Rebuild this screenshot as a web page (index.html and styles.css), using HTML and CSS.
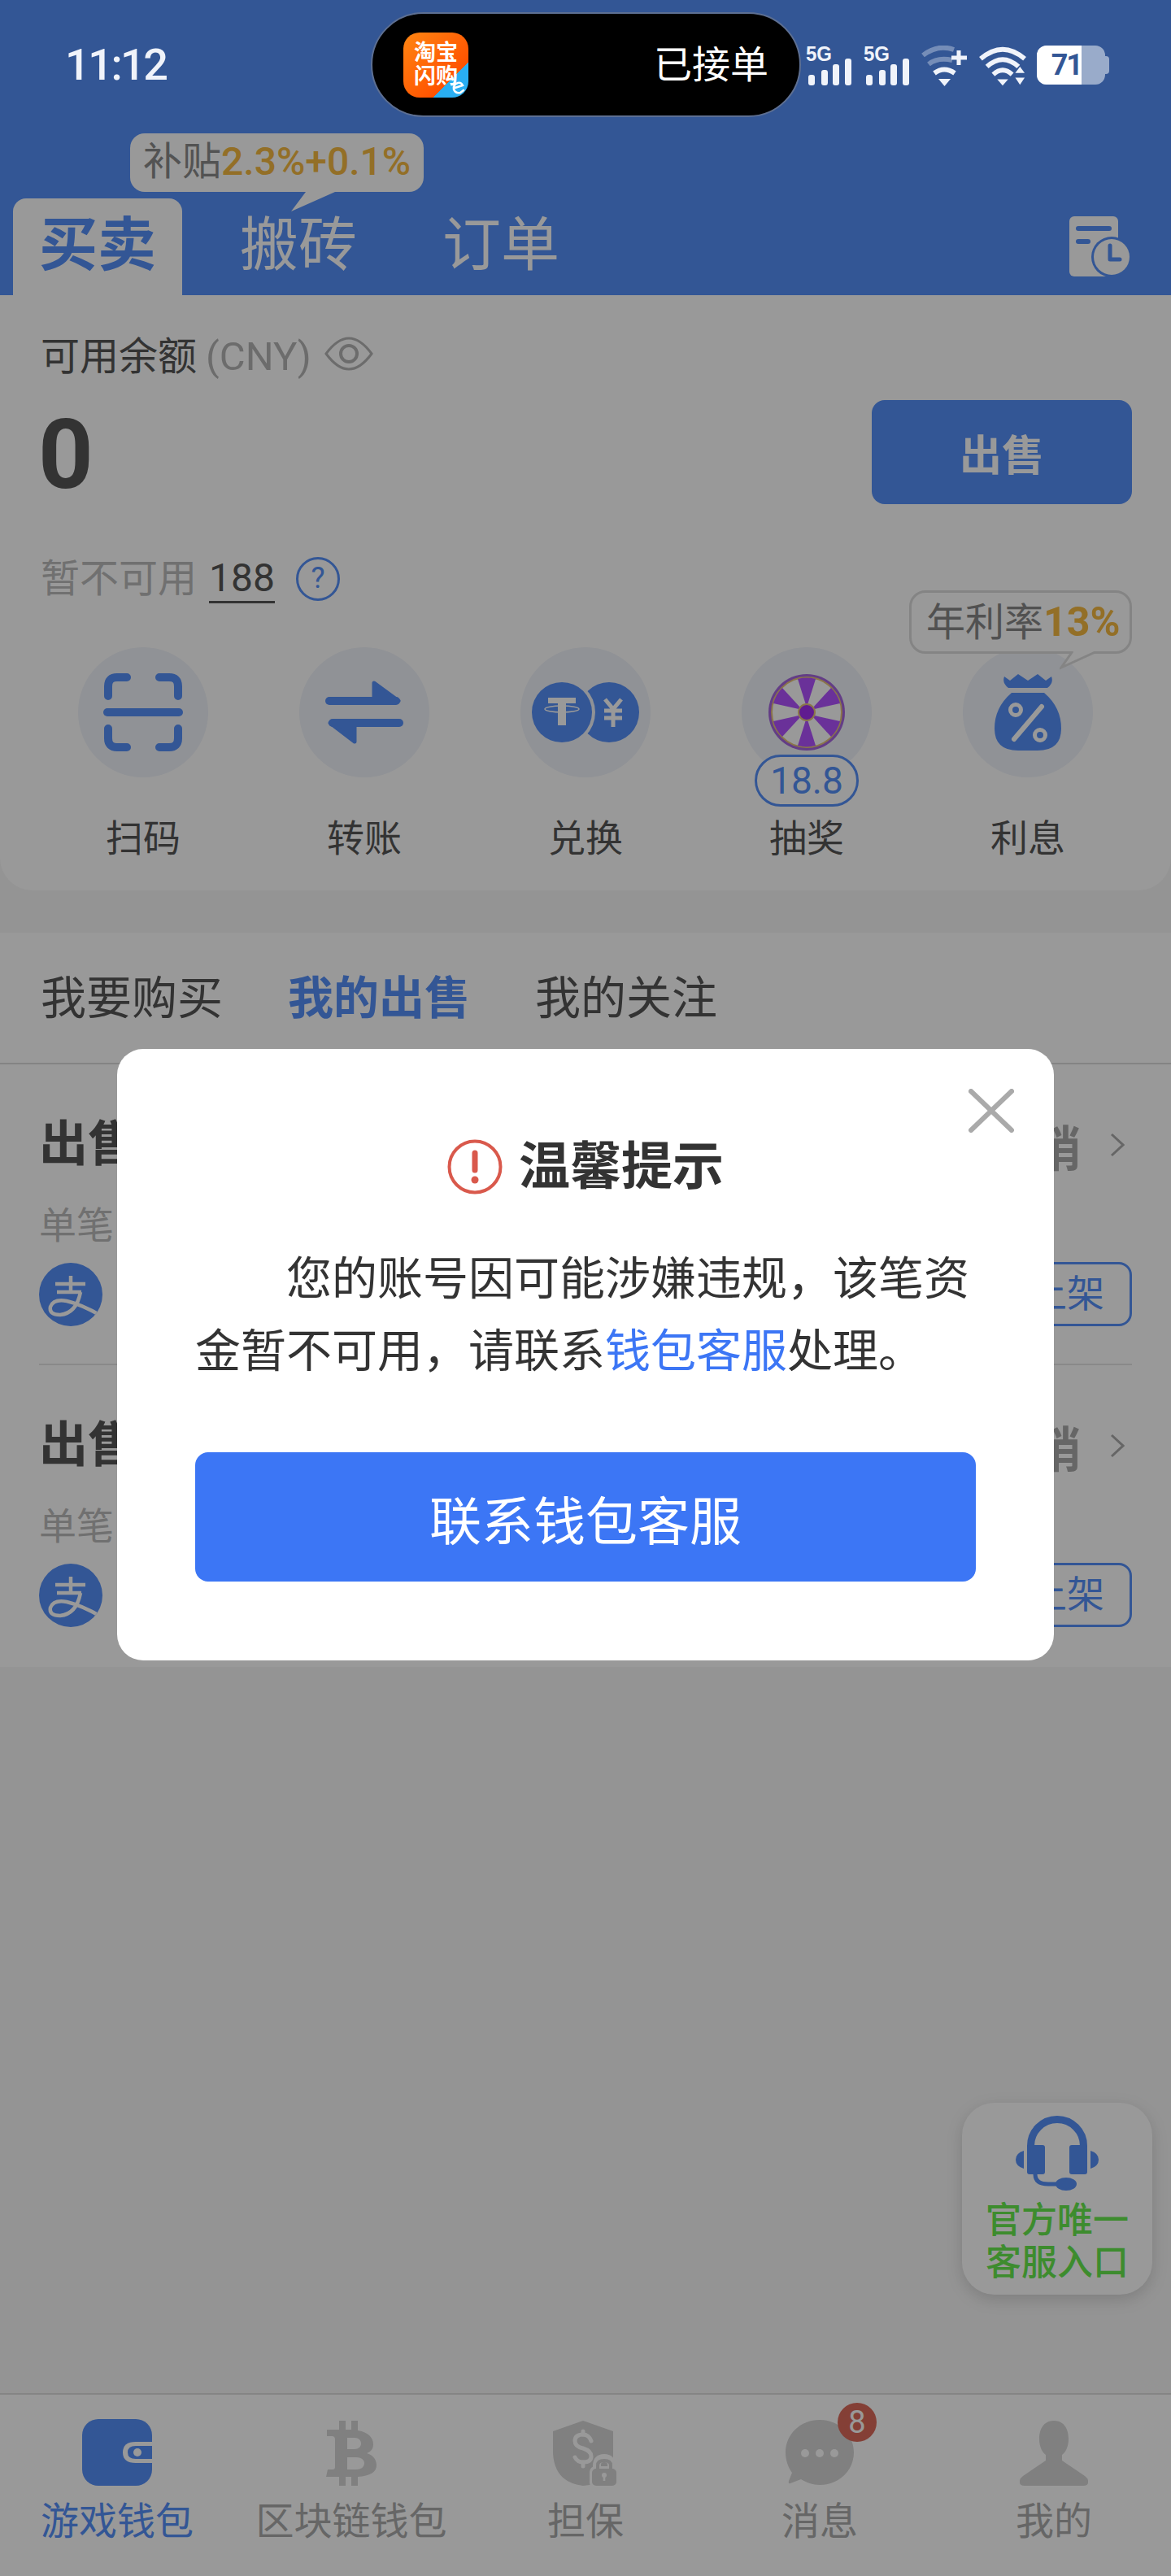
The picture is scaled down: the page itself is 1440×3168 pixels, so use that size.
FILE: index.html
```html
<!DOCTYPE html>
<html lang="zh-CN">
<head>
    <meta charset="UTF-8">
    <meta name="viewport" content="width=device-width, initial-scale=1.0">
    <title>钱包</title>
    <link rel="stylesheet" href="styles.css">
</head>
<body>
<div class="page">

    <!-- Header -->
    <header class="header">
        <div class="status-bar">
            <div class="time">11:12</div>
            <div class="island">
                <div class="app-tile">
                    <span>淘宝</span><span>闪购</span>
                    <svg class="app-e" viewBox="0 0 20 20"><path d="M4 10.500 L15 7 Q13 3 9 4 Q3 6 4 12 Q6 17 12 16 L16 13" fill="none" stroke="#fff" stroke-width="2.500" stroke-linecap="round"/></svg>
                </div>
                <div class="island-text">已接单</div>
            </div>
            <div class="status-icons">
                <svg class="sim" viewBox="0 -8 58 58"><text x="0" y="19" class="sim-text" textLength="32" lengthAdjust="spacingAndGlyphs">5G</text><rect x="3" y="36" width="8" height="13" rx="3"/><rect x="19" y="30" width="8" height="19" rx="3"/><rect x="33" y="23" width="8" height="26" rx="3"/><rect x="48" y="16" width="8" height="33" rx="3"/></svg>
                <svg class="sim" viewBox="0 -8 58 58"><text x="0" y="19" class="sim-text" textLength="32" lengthAdjust="spacingAndGlyphs">5G</text><rect x="3" y="36" width="8" height="13" rx="3"/><rect x="19" y="30" width="8" height="19" rx="3"/><rect x="33" y="23" width="8" height="26" rx="3"/><rect x="48" y="16" width="8" height="33" rx="3"/></svg>
                <svg class="wifi" viewBox="0 0 58 50"><g fill="none" stroke="#f0f3fa" stroke-width="6"><path d="M2 12 Q20 -2 40 5" opacity=".35"/><path d="M9 23 Q20 14 38 18" opacity=".35"/><path d="M16 34 Q28 25 41 34"/></g><path d="M21 41 H36 L28.500 50 Z" fill="#f0f3fa"/><path d="M46 6 V24 M37 15 H56" stroke="#f0f3fa" stroke-width="5" fill="none"/></svg>
                <svg class="wifi" viewBox="0 0 60 50"><g fill="none" stroke="#f0f3fa" stroke-width="6"><path d="M2 16 Q30 -8 58 16"/><path d="M10 26 Q30 8 50 26"/><path d="M18 36 Q30 25 42 36"/></g><path d="M23 42 H37 L30 50 Z" fill="#f0f3fa"/><path d="M46 34 L58 34 L52 26 Z M46 40 H58 L52 49 Z" fill="#f0f3fa"/></svg>
                <div class="battery">
                    <div class="battery-box"><div class="battery-fill">71</div></div>
                    <i class="battery-nub"></i>
                </div>
            </div>
        </div>

        <div class="header-tabs">
            <div class="subsidy">补贴<b>2.3%+0.1%</b><i class="subsidy-tail"></i></div>
            <div class="tab active">买卖</div>
            <div class="tab">搬砖</div>
            <div class="tab">订单</div>
            <svg class="records" viewBox="0 0 75 74">
                <rect x="0" y="0" width="60" height="74" rx="6" fill="#fff"/>
                <rect x="8" y="12" width="44" height="6" rx="3" fill="#558ff8"/>
                <rect x="8" y="28" width="18" height="6" rx="3" fill="#558ff8"/>
                <circle cx="52" cy="50" r="25" fill="#558ff8"/>
                <circle cx="52" cy="50" r="22" fill="#fff"/>
                <path d="M50 36 V53 H62" fill="none" stroke="#558ff8" stroke-width="5" stroke-linecap="round" stroke-linejoin="round"/>
            </svg>
        </div>
    </header>

    <!-- Balance card -->
    <section class="card">
        <div class="balance-label">
            <span>可用余额</span><span class="unit">(CNY)</span>
            <svg class="eye" viewBox="0 0 60 42"><path d="M2 21 Q30 -17 58 21 Q30 59 2 21 Z" fill="none" stroke="#b5b5b5" stroke-width="3"/><circle cx="30" cy="21" r="10" fill="none" stroke="#b5b5b5" stroke-width="4"/></svg>
        </div>
        <div class="balance-row">
            <div class="balance">0</div>
            <button class="sell-btn">出售</button>
        </div>
        <div class="frozen-row">
            <span class="frozen-label">暂不可用</span>
            <span class="frozen-value">188</span>
            <span class="help">?</span>
        </div>
        <div class="actions">
            <div class="action">
                <div class="action-icon">
                    <svg viewBox="0 0 160 160"><g fill="none" stroke="#558ff8" stroke-width="10" stroke-linecap="round"><path d="M60 37 H48 Q37 37 37 48 V60"/><path d="M100 37 H112 Q123 37 123 48 V60"/><path d="M37 100 V112 Q37 123 48 123 H60"/><path d="M123 100 V112 Q123 123 112 123 H100"/><path d="M36 80 H124"/></g></svg>
                </div>
                <div class="action-name">扫码</div>
            </div>
            <div class="action">
                <div class="action-icon">
                    <svg viewBox="0 0 160 160"><g fill="#558ff8" stroke="#558ff8" stroke-linejoin="round" stroke-width="5"><path d="M92 44 L122 66 H92 Z"/><path d="M68 116 L38 93 H68 Z"/></g><g stroke="#558ff8" stroke-width="10" stroke-linecap="round"><path d="M37 66 H119"/><path d="M41 93 H123"/></g></svg>
                </div>
                <div class="action-name">转账</div>
            </div>
            <div class="action">
                <div class="action-icon">
                    <svg viewBox="0 0 160 160"><g transform="translate(8 0)"><circle cx="101" cy="80" r="37" fill="#558ff8"/><g stroke="#fff" stroke-width="5" fill="none"><path d="M96 64 L106 76 L116 64 M106 76 V98 M95 78 H117 M95 87 H117"/></g><circle cx="43" cy="80" r="41" fill="#f0f3fa"/><circle cx="43" cy="80" r="37" fill="#558ff8"/><path d="M26 62 H60 V69 H48 V96 H38 V69 H26 Z" fill="#fff"/><ellipse cx="43" cy="76" rx="21" ry="4" fill="none" stroke="#fff" stroke-width="1.500"/></g></svg>
                </div>
                <div class="action-name">兑换</div>
            </div>
            <div class="action">
                <div class="action-icon">
                    <svg viewBox="0 0 160 160">
                        <circle cx="80" cy="80" r="47" fill="#a566e0"/>
                        <circle cx="80" cy="80" r="43" fill="#fff" stroke="#e6c47a" stroke-width="2"/>
                        <g fill="#b153ff" transform="translate(80 80)">
                            <path d="M0 -6 L-11 -41 A42 42 0 0 1 11 -41 Z"/>
                            <path d="M0 -6 L-11 -41 A42 42 0 0 1 11 -41 Z" transform="rotate(60)"/>
                            <path d="M0 -6 L-11 -41 A42 42 0 0 1 11 -41 Z" transform="rotate(120)"/>
                            <path d="M0 -6 L-11 -41 A42 42 0 0 1 11 -41 Z" transform="rotate(180)"/>
                            <path d="M0 -6 L-11 -41 A42 42 0 0 1 11 -41 Z" transform="rotate(240)"/>
                            <path d="M0 -6 L-11 -41 A42 42 0 0 1 11 -41 Z" transform="rotate(300)"/>
                        </g>
                        <circle cx="80" cy="80" r="10" fill="#a030f0" stroke="#e6c47a" stroke-width="2"/>
                    </svg>
                </div>
                <div class="lottery-pill">18.8</div>
                <div class="action-name">抽奖</div>
            </div>
            <div class="action">
                <div class="rate-tip">年利率<b>13%</b><svg class="rate-tail" viewBox="0 0 50 24"><path d="M16 0 L2 20 L46 0" fill="#fff" stroke="#ddd" stroke-width="3"/></svg></div>
                <div class="action-icon">
                    <svg viewBox="0 0 160 160">
                        <path d="M51 36 L58 41 L68 33 L80 41 L92 33 L102 41 L109 36 Q112 44 104 50 H56 Q48 44 51 36 Z" fill="#558ff8"/>
                        <path d="M60 56 H100 Q121 74 121 100 Q121 127 92 127 H68 Q39 127 39 100 Q39 74 60 56 Z" fill="#558ff8"/>
                        <path d="M63 113 L97 73" stroke="#fff" stroke-width="6" stroke-linecap="round"/>
                        <circle cx="65" cy="77" r="6.500" fill="none" stroke="#fff" stroke-width="5"/>
                        <circle cx="95" cy="108" r="6.500" fill="none" stroke="#fff" stroke-width="5"/>
                    </svg>
                </div>
                <div class="action-name">利息</div>
            </div>
        </div>
    </section>

    <!-- Orders -->
    <section class="orders">
        <div class="order-tabs">
            <div class="order-tab">我要购买</div>
            <div class="order-tab active">我的出售</div>
            <div class="order-tab">我的关注</div>
        </div>
        <div class="order-list">
            <div class="order">
                <div class="order-top">
                    <div class="order-title">出售</div>
                    <div class="order-cancel">撤销<svg class="chevron" viewBox="0 0 18 30"><path d="M2 2 L16 15 L2 28" fill="none" stroke="#aaa" stroke-width="3"/></svg></div>
                </div>
                <div class="order-sub">单笔</div>
                <div class="order-bottom">
                    <svg class="alipay" viewBox="0 0 78 78"><defs><clipPath id="pay-clip"><circle cx="39" cy="39" r="39"/></clipPath></defs><circle cx="39" cy="39" r="39" fill="#558ff8"/><g clip-path="url(#pay-clip)" fill="none" stroke="#fff" stroke-width="4.500"><path d="M20 26 H57 M39 16 V36 M22 36 H52"/><path d="M51 36 Q46 62 26 64 Q12 64 14 54 Q18 44 34 47 Q52 51 78 66"/></g></svg>
                    <div class="list-btn">上架</div>
                </div>
            </div>
            <div class="order">
                <div class="order-top">
                    <div class="order-title">出售</div>
                    <div class="order-cancel">撤销<svg class="chevron" viewBox="0 0 18 30"><path d="M2 2 L16 15 L2 28" fill="none" stroke="#aaa" stroke-width="3"/></svg></div>
                </div>
                <div class="order-sub">单笔</div>
                <div class="order-bottom">
                    <svg class="alipay" viewBox="0 0 78 78"><circle cx="39" cy="39" r="39" fill="#558ff8"/><g clip-path="url(#pay-clip)" fill="none" stroke="#fff" stroke-width="4.500"><path d="M20 26 H57 M39 16 V36 M22 36 H52"/><path d="M51 36 Q46 62 26 64 Q12 64 14 54 Q18 44 34 47 Q52 51 78 66"/></g></svg>
                    <div class="list-btn">上架</div>
                </div>
            </div>
        </div>
    </section>

    <div class="spacer"></div>

    <!-- Bottom nav -->
    <nav class="bottom-nav">
        <div class="nav-item active">
            <div class="nav-icon">
                <svg width="86" height="82" viewBox="0 0 86 82"><rect width="86" height="82" rx="20" fill="#558ff8"/><path d="M86 28 H66 Q50 28 50 41 Q50 54 66 54 H86 Z" fill="#fff"/><path d="M86 33 H66 Q56 33 56 41 Q56 49 66 49 H86 Z" fill="#558ff8"/><ellipse cx="68" cy="41" rx="5" ry="5" fill="#fff"/></svg>
            </div>
            <div class="nav-name">游戏钱包</div>
        </div>
        <div class="nav-item">
            <div class="nav-icon">
                <svg width="62" height="80" viewBox="0 0 62 80"><path fill="#d5d5d5" fill-rule="evenodd" d="M16 0 H24 V11 H31 V0 H39 V12 C52 14 58 21 58 29 C58 35 55 38 50 40 C57 42 62 47 62 55 C62 63 54 68 39 69 V80 H31 V69 H24 V80 H16 V69 H0 L2 60 H8 Q11 60 11 57 V23 Q11 19 7 19 H1 V11 H16 Z M26 21 V35 H35 C40 35 43 32 43 28 C43 24 40 21 35 21 Z M26 45 V60 H37 C43 60 47 57 47 52 C47 48 43 45 37 45 Z"/></svg>
            </div>
            <div class="nav-name">区块链钱包</div>
        </div>
        <div class="nav-item">
            <div class="nav-icon">
                <svg width="80" height="80" viewBox="0 0 80 80">
                    <path d="M37 0 L74 13 V46 Q72 78 37 80 Q2 76 0 40 V13 Z" fill="#d5d5d5"/>
                    <g fill="none" stroke="#fff" stroke-width="5" stroke-linecap="round"><path d="M47 25 Q44 17 37 17 Q27 17 27 25 Q27 32 37 34 Q47 37 47 44 Q47 51 37 51 Q30 51 27 45"/><path d="M37 13 V17 M37 51 V56"/></g>
                    <rect x="45" y="56" width="36" height="27" rx="7" fill="#fff"/>
                    <path d="M54 60 V55 Q54 46 63 46 Q72 46 72 55 V60" fill="none" stroke="#fff" stroke-width="10"/>
                    <path d="M55 60 V55 Q55 49 63 49 Q71 49 71 55 V60" fill="none" stroke="#d5d5d5" stroke-width="4"/>
                    <rect x="48" y="59" width="30" height="21" rx="5" fill="#d5d5d5"/>
                    <circle cx="63" cy="67" r="3" fill="#fff"/><rect x="61.700" y="67" width="2.600" height="7" fill="#fff"/>
                </svg>
            </div>
            <div class="nav-name">担保</div>
        </div>
        <div class="nav-item">
            <div class="nav-icon">
                <svg width="84" height="82" viewBox="0 0 84 82"><path d="M42 1 C66 1 84 19 84 41 C84 63 66 81 42 81 C33 81 26 78 19 74 L6 79 Q3 80 4 76 L8 66 C3 59 0 50 0 41 C0 19 18 1 42 1 Z" fill="#d5d5d5"/><circle cx="24" cy="42" r="5" fill="#fff"/><circle cx="42" cy="42" r="5" fill="#fff"/><circle cx="60" cy="42" r="5" fill="#fff"/></svg>
                <span class="badge">8</span>
            </div>
            <div class="nav-name">消息</div>
        </div>
        <div class="nav-item">
            <div class="nav-icon">
                <svg width="84" height="80" viewBox="0 0 84 80"><path d="M42 0 C55 0 60 11 60 22 C60 33 56 39 52 42 V49 L80 68 Q84 71 84 74 V76 Q84 80 78 80 H6 Q0 80 0 76 V74 Q0 71 4 68 L32 49 V42 C28 39 24 33 24 22 C24 11 29 0 42 0 Z" fill="#d5d5d5"/></svg>
            </div>
            <div class="nav-name">我的</div>
        </div>
    </nav>

    <!-- Support entry -->
    <div class="support">
        <svg class="support-icon" viewBox="0 0 102 94">
            <path d="M18.500 42 V37 A32.500 32.500 0 0 1 83.500 37 V42" fill="none" stroke="#558ff8" stroke-width="9"/>
            <rect x="14" y="36" width="22" height="36" rx="3" fill="#558ff8"/>
            <rect x="66" y="36" width="22" height="36" rx="3" fill="#558ff8"/>
            <path d="M10 43 V65 Q0 62 0 54 Q0 46 10 43 Z" fill="#558ff8"/>
            <path d="M92 43 V65 Q102 62 102 54 Q102 46 92 43 Z" fill="#558ff8"/>
            <path d="M24 72 Q24 84 40 84 H52" fill="none" stroke="#558ff8" stroke-width="5"/>
            <ellipse cx="62" cy="84" rx="13" ry="8" fill="#558ff8"/>
        </svg>
        <div class="support-text">官方唯一<br>客服入口</div>
    </div>

    <!-- Dimmer and notice dialog -->
    <div class="overlay">
        <div class="dialog">
            <svg class="close" viewBox="0 0 56 54"><path d="M3 3 L53 51 M53 3 L3 51" stroke="#aaa" stroke-width="6" stroke-linecap="round"/></svg>
            <div class="dialog-title">
                <svg class="warn" viewBox="0 0 68 68"><circle cx="34" cy="34" r="31.500" fill="none" stroke="#d9594c" stroke-width="4"/><path d="M34 17 V38" stroke="#d9594c" stroke-width="7" stroke-linecap="round"/><circle cx="34" cy="50" r="4.500" fill="#d9594c"/></svg>
                <span>温馨提示</span>
            </div>
            <p class="dialog-text">您的账号因可能涉嫌违规&#65292;该笔资金暂不可用&#65292;请联系<a href="#">钱包客服</a>处理。</p>
            <button class="dialog-btn">联系钱包客服</button>
        </div>
    </div>
</div>
</body>
</html>
```

FILE: styles.css
```css
* {
    box-sizing: border-box;
}

html, body {
    margin: 0;
    padding: 0;
}

body {
    font-family: Roboto, "Noto Sans CJK SC", sans-serif;
    color: #555;
    background: #f7f7f7;
}

svg {
    display: block;
}

.page {
    position: relative;
    width: 1440px;
    height: 3168px;
    display: flex;
    flex-direction: column;
    overflow: hidden;
    background: #f7f7f7;
}

/* header */
.header {
    height: 363px;
    background: #558ff8;
    display: flex;
    flex-direction: column;
    justify-content: space-between;
}

.status-bar {
    position: relative;
    z-index: 3;
    display: flex;
    align-items: flex-start;
    padding: 15px 0 0 80px;
    color: #f0f3fa;
}

.time {
    width: 376px;
    font-size: 54px;
    font-weight: 500;
    line-height: 130px;
    letter-spacing: -2.500px;
}

.island {
    width: 529px;
    height: 129px;
    background: #000;
    border: 2px solid #5d6f92;
    border-radius: 65px;
    display: flex;
    align-items: center;
    justify-content: space-between;
    padding: 0 38px;
}

.app-tile {
    position: relative;
    width: 80px;
    height: 80px;
    border-radius: 20px;
    background: linear-gradient(135deg, #ff8612 0%, #ff5200 73%, #29aef2 73%);
    display: flex;
    flex-direction: column;
    align-items: center;
    justify-content: center;
    color: #fff;
    font-size: 27px;
    font-weight: 700;
    line-height: 29px;
}

.app-e {
    position: absolute;
    right: 2px;
    bottom: 2px;
    width: 20px;
    height: 20px;
}

.island-text {
    color: #fff;
    font-size: 47px;
    line-height: 60px;
}

.status-icons {
    display: flex;
    align-items: flex-start;
    margin: 33px 0 0 6px;
    gap: 13px;
}

.sim {
    width: 58px;
    height: 58px;
    fill: #f0f3fa;
}

.sim-text {
    font-family: "Liberation Sans", sans-serif;
    font-size: 26px;
    font-weight: 700;
}

.wifi {
    width: 58px;
    height: 50px;
    margin-top: 8px;
}

.battery {
    display: flex;
    align-items: center;
    margin-top: 8px;
}

.battery-box {
    width: 84px;
    height: 48px;
    border-radius: 12px;
    background: rgba(255, 255, 255, 0.5);
    overflow: hidden;
}

.battery-fill {
    width: 55px;
    height: 48px;
    background: #fff;
    color: #335695;
    font-size: 36px;
    font-weight: 700;
    line-height: 48px;
    text-align: right;
    letter-spacing: -2px;
}

.battery-nub {
    width: 5px;
    height: 22px;
    border-radius: 0 4px 4px 0;
    background: rgba(255, 255, 255, 0.5);
}

.header-tabs {
    position: relative;
    display: flex;
    align-items: flex-end;
    padding-left: 16px;
    gap: 37px;
}

.tab {
    height: 119px;
    padding: 0 34px;
    font-size: 72px;
    line-height: 116px;
    color: #fff;
    border-radius: 16px 16px 0 0;
}

.tab.active {
    width: 208px;
    padding: 0;
    text-align: center;
    background: #fff;
    color: #558ff8;
    font-weight: 700;
}

.subsidy {
    position: absolute;
    left: 160px;
    top: -80px;
    height: 72px;
    padding: 0 16px 0 16px;
    border-radius: 18px;
    background: #fff;
    font-size: 48px;
    line-height: 70px;
    color: #8a8a8a;
    white-space: nowrap;
}

.subsidy b {
    color: #f5b942;
    font-weight: 500;
    font-size: 48px;
}

.subsidy-tail {
    position: absolute;
    left: 198px;
    top: 72px;
    width: 54px;
    height: 24px;
    background: #fff;
    clip-path: polygon(18px 0, 54px 0, 0 24px);
}

.records {
    width: 75px;
    height: 74px;
    margin: 0 50px 23px auto;
}

/* balance card */
.card {
    background: #fff;
    border-radius: 0 0 40px 40px;
    padding: 46px 48px 34px 50px;
    height: 732px;
}

.balance-label {
    display: flex;
    align-items: center;
    font-size: 48px;
    line-height: 60px;
    color: #555;
}

.unit {
    color: #b5b5b5;
    margin-left: 11px;
    font-size: 49px;
}

.eye {
    width: 60px;
    height: 42px;
    margin: -8px 0 0 16px;
}

.balance-row {
    display: flex;
    align-items: center;
    justify-content: space-between;
    margin-top: 23px;
}

.balance {
    margin-left: -3px;
    padding-top: 8px;
    font-size: 118px;
    font-weight: 700;
    line-height: 120px;
    color: #555;
}

.sell-btn {
    width: 320px;
    height: 128px;
    border: none;
    border-radius: 16px;
    background: #558ff8;
    color: #fff;
    font-family: inherit;
    font-size: 52px;
    font-weight: 700;
}

.frozen-row {
    display: flex;
    align-items: center;
    margin-top: 62px;
    font-size: 48px;
    line-height: 60px;
}

.frozen-label {
    color: #bbb;
}

.frozen-value {
    margin-left: 15px;
    color: #555;
    border-bottom: 3px solid #555;
    line-height: 56px;
}

.help {
    width: 54px;
    height: 54px;
    margin-left: 26px;
    border: 3px solid #558ff8;
    border-radius: 50%;
    color: #558ff8;
    font-size: 36px;
    line-height: 46px;
    text-align: center;
}

.actions {
    display: grid;
    grid-template-columns: repeat(5, 272px);
    margin: 54px 0 0 -10px;
}

.action {
    position: relative;
    display: flex;
    flex-direction: column;
    align-items: center;
}

.action-icon {
    width: 160px;
    height: 160px;
    border-radius: 50%;
    background: #f0f3fa;
}

.action-name {
    margin-top: 45px;
    font-size: 46px;
    line-height: 60px;
    color: #555;
}

.lottery-pill {
    position: absolute;
    top: 132px;
    left: 72px;
    width: 128px;
    height: 64px;
    border: 3px solid #558ff8;
    border-radius: 32px;
    background: #fff;
    color: #558ff8;
    font-size: 46px;
    line-height: 58px;
    text-align: center;
}

.rate-tip {
    position: absolute;
    z-index: 1;
    top: -70px;
    right: 8px;
    height: 78px;
    width: 274px;
    padding-left: 18px;
    border: 3px solid #ddd;
    border-radius: 20px;
    background: #fff;
    font-size: 48px;
    line-height: 72px;
    color: #888;
    white-space: nowrap;
}

.rate-tip b {
    color: #f5b942;
    font-size: 50px;
    font-weight: 700;
}

.rate-tail {
    position: absolute;
    left: 182px;
    top: 72px;
    width: 50px;
    height: 24px;
}

/* orders */
.orders {
    margin-top: 52px;
    background: #fff;
    height: 903px;
}

.order-tabs {
    display: flex;
    gap: 80px;
    height: 162px;
    padding-left: 50px;
    border-bottom: 2px solid #ddd;
    font-size: 56px;
    line-height: 162px;
}

.order-tab {
    color: #555;
}

.order-tab.active {
    color: #558ff8;
    font-weight: 700;
}

.order-list {
    padding: 0 48px;
}

.order {
    height: 370px;
    padding-top: 64px;
    border-bottom: 2px solid #e4e4e4;
}

.order:last-child {
    border-bottom: none;
}

.order-top {
    display: flex;
    justify-content: space-between;
    align-items: center;
    height: 70px;
}

.order-title {
    font-size: 60px;
    font-weight: 700;
    line-height: 70px;
    color: #555;
}

.order-cancel {
    display: flex;
    align-items: center;
    font-size: 60px;
    font-weight: 700;
    color: #aaa;
}

.chevron {
    width: 18px;
    height: 30px;
    margin: 0 9px 0 36px;
}

.order-sub {
    margin-top: 39px;
    font-size: 46px;
    line-height: 50px;
    color: #bbb;
}

.order-bottom {
    display: flex;
    justify-content: space-between;
    align-items: center;
    margin-top: 20px;
}

.alipay {
    width: 78px;
    height: 78px;
}

.list-btn {
    width: 180px;
    height: 79px;
    border: 3px solid #558ff8;
    border-radius: 16px;
    color: #558ff8;
    font-size: 46px;
    line-height: 72px;
    text-align: right;
    padding-right: 31px;
}

.spacer {
    flex: 1;
}

/* bottom nav */
.bottom-nav {
    display: grid;
    grid-template-columns: repeat(5, 1fr);
    height: 225px;
    padding-top: 30px;
    background: #fff;
    border-top: 2px solid #ddd;
}

.nav-item {
    display: flex;
    flex-direction: column;
    align-items: center;
    color: #aaa;
}

.nav-item.active {
    color: #558ff8;
}

.nav-icon {
    position: relative;
    height: 82px;
    display: flex;
    align-items: flex-end;
}

.nav-name {
    margin-top: 16px;
    font-size: 47px;
    line-height: 56px;
}

.badge {
    position: absolute;
    left: 64px;
    top: -20px;
    width: 48px;
    height: 48px;
    border-radius: 50%;
    background: #dc6a5a;
    color: #fff;
    font-size: 38px;
    line-height: 48px;
    text-align: center;
}

/* support entry */
.support {
    position: absolute;
    left: 1183px;
    top: 2586px;
    width: 234px;
    height: 236px;
    border-radius: 40px;
    background: #fff;
    box-shadow: 0 6px 20px rgba(0, 0, 0, 0.15);
    display: flex;
    flex-direction: column;
    align-items: center;
    padding-top: 16px;
}

.support-icon {
    width: 102px;
    height: 94px;
}

.support-text {
    margin-top: 9px;
    color: #67e94d;
    font-size: 44px;
    font-weight: 500;
    line-height: 52px;
    text-align: center;
    white-space: nowrap;
}

/* dialog */
.overlay {
    position: absolute;
    inset: 0;
    z-index: 2;
    background: rgba(0, 0, 0, 0.4);
    display: flex;
    justify-content: center;
    align-items: flex-start;
    padding-top: 1290px;
}

.dialog {
    position: relative;
    width: 1152px;
    height: 752px;
    padding: 111px 96px 0;
    border-radius: 32px;
    background: #fff;
}

.close {
    position: absolute;
    top: 49px;
    right: 49px;
    width: 56px;
    height: 54px;
}

.dialog-title {
    display: flex;
    align-items: center;
    justify-content: center;
    color: #333;
    font-size: 63px;
    font-weight: 700;
    line-height: 68px;
}

.warn {
    width: 68px;
    height: 68px;
    margin-right: 20px;
}

.dialog-text {
    margin: 60px 0 0;
    text-indent: 112px;
    color: #333;
    font-size: 56px;
    line-height: 89px;
}

.dialog-text a {
    color: #3c76f5;
    text-decoration: none;
}

.dialog-btn {
    display: block;
    width: 960px;
    height: 159px;
    margin-top: 79px;
    border: none;
    border-radius: 16px;
    background: #3c76f5;
    color: #fff;
    font-family: inherit;
    font-size: 64px;
}
```
